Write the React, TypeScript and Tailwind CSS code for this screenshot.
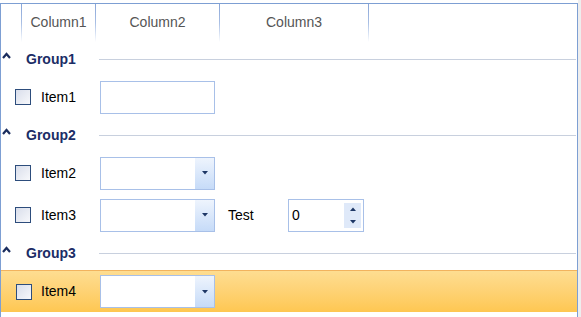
import React from "react";

function Chevron() {
  return (
    <svg width="9" height="7" viewBox="0 0 9 7" className="mb-[7px]">
      <polyline points="1,6 4.5,2 8,6" fill="none" stroke="#1b2d5e" strokeWidth="2.2" />
    </svg>
  );
}

function Arrow({ up = false }: { up?: boolean }) {
  return (
    <svg width="6" height="4" viewBox="0 0 6 4">
      <polygon points={up ? "0,4 6,4 3,0.5" : "0,0 6,0 3,3.5"} fill="#1e3766" />
    </svg>
  );
}

function Checkbox() {
  return (
    <div className="w-[16px] h-[16px] border border-[#2d4d7c] bg-gradient-to-br from-[#d9deeb] to-[#f7f8fb]" />
  );
}

function TextBox() {
  return <div className="w-[115px] h-[33px] border border-[#a8c0e8] bg-white" />;
}

function Combo() {
  return (
    <div className="w-[115px] h-[33px] border border-[#a8c0e8] bg-white flex justify-end">
      <div className="w-[19px] h-full bg-gradient-to-b from-[#eef4fd] to-[#c6dbf8] flex items-center justify-center">
        <Arrow />
      </div>
    </div>
  );
}

function Numeric() {
  return (
    <div className="w-[76px] h-[33px] border border-[#a8c0e8] bg-white flex items-center pl-[3px] pr-[2px]">
      <span className="flex-1 text-[14px] text-black">0</span>
      <div className="flex flex-col w-[17px] mt-[1px]">
        <div className="h-[12px] bg-[#dfe9f9] flex items-center justify-center">
          <Arrow up />
        </div>
        <div className="h-[13px] bg-[#dfe9f9] flex items-center justify-center">
          <Arrow />
        </div>
      </div>
    </div>
  );
}

function GroupRow({ title }: { title: string }) {
  return (
    <div className="h-[34px] flex items-center">
      <div className="w-[25px] pl-[1px] flex items-center">
        <Chevron />
      </div>
      <div className="w-[73px] text-[14px] font-bold text-[#1b2d66]">{title}</div>
      <div className="flex-1 h-px bg-[#c8d0de] mr-px" />
    </div>
  );
}

function ItemRow({ label, children, selected = false }: { label: string; children: React.ReactNode; selected?: boolean }) {
  return (
    <div
      className={
        selected
          ? "h-[42px] flex items-center border-t border-[#f2b35e] bg-gradient-to-b from-[#fedd91] to-[#fec751] pl-[15px]"
          : "h-[42px] flex items-center pl-[14px]"
      }
    >
      <Checkbox />
      <div className={selected ? "w-[68px] pl-[9px] text-[14px] text-black" : "w-[69px] pl-[10px] text-[14px] text-black"}>
        {label}
      </div>
      {children}
    </div>
  );
}

function HeaderDivider() {
  return <div className="w-px self-stretch bg-gradient-to-b from-[#8aa6d8] via-[#a9bfe4] to-white" />;
}

export default function App() {
  return (
    <div className="w-[581px] h-[317px] bg-white flex overflow-hidden" style={{ fontFamily: '"Liberation Sans", Arial, sans-serif' }}>
      <div className="w-[578px] h-full pt-[3px]">
        <div className="h-full border-t border-l border-r border-[#7d9fd3] flex flex-col">
          {/* header */}
          <div className="h-[38px] flex text-[14px] text-[#555]">
            <div className="w-[20px]" />
            <HeaderDivider />
            <div className="w-[73px] flex items-center justify-center pb-[2px]">Column1</div>
            <HeaderDivider />
            <div className="w-[123px] flex items-center justify-center pb-[2px]">Column2</div>
            <HeaderDivider />
            <div className="w-[148px] flex items-center justify-center pb-[2px]">Column3</div>
            <HeaderDivider />
          </div>

          <GroupRow title="Group1" />
          <ItemRow label="Item1">
            <TextBox />
          </ItemRow>

          <GroupRow title="Group2" />
          <ItemRow label="Item2">
            <Combo />
          </ItemRow>
          <ItemRow label="Item3">
            <Combo />
            <div className="w-[60px] pl-[13px] text-[14px] text-black box-content">Test</div>
            <Numeric />
          </ItemRow>

          <GroupRow title="Group3" />
          <ItemRow label="Item4" selected>
            <Combo />
          </ItemRow>
        </div>
      </div>
      <div className="flex-1 h-full bg-[#eeeeee]" />
    </div>
  );
}
